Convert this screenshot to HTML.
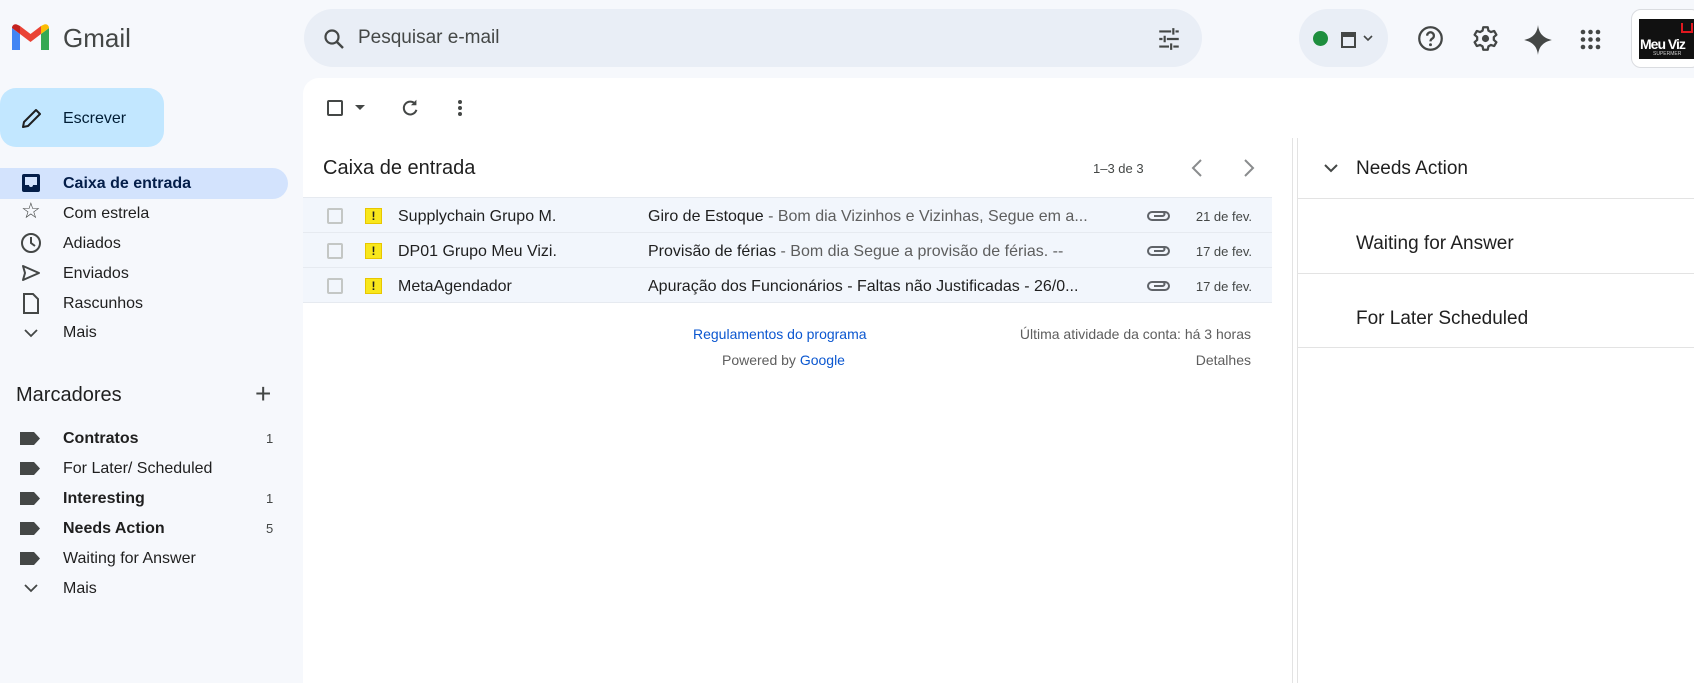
<!DOCTYPE html>
<html><head><meta charset="utf-8"><style>
*{margin:0;padding:0;box-sizing:border-box}
body{width:1694px;height:683px;overflow:hidden;background:#f6f8fc;font-family:"Liberation Sans",Arial,sans-serif;color:#1f1f1f;position:relative}
.a{position:absolute;white-space:nowrap}
.nav{position:absolute;left:63px;font-size:16px;color:#1f1f1f;line-height:20px}
.ic{position:absolute}
.lab{position:absolute;left:20px;width:20px;height:13px;background:#444746;clip-path:polygon(0 0,70% 0,100% 50%,70% 100%,0 100%)}
.cnt{position:absolute;left:266px;font-size:13px;color:#444746}
.row{position:absolute;left:303px;width:969px;height:35px;background:#f2f6fc;border-bottom:1px solid #e6eaf0}
.row .cb{position:absolute;left:24px;top:10px;width:16px;height:16px;border:2px solid #c4c7c5;border-radius:2px}
.row .imp{position:absolute;left:62px;top:10px;width:17px;height:16px;background:#f8e71c;border:1px solid #e8c600;font:bold 12px "Liberation Sans";text-align:center;line-height:14px;color:#1f1f1f}
.row .s{position:absolute;left:95px;top:10px;font-size:16px}
.row .sub{position:absolute;left:345px;top:10px;font-size:16px}
.row .sub span{color:#5e5e5e}
.row .d{position:absolute;right:20px;top:11px;font-size:13px;color:#444746}
.row .clip{position:absolute;left:843px;top:11px}
.rp{position:absolute;left:1356px;font-size:19px;color:#1f1f1f}
.sep{position:absolute;left:1298px;width:396px;height:1px;background:#e3e3e3}
</style></head><body>
<svg class="ic" style="left:12px;top:24px" width="37" height="28" viewBox="0 0 37 28">
<path d="M0 4v22h8V10z" fill="#4285f4"/><path d="M29 10v16h8V4z" fill="#34a853"/>
<path d="M29 2v8l-10.5 8L8 10V2l10.5 8z" fill="#ea4335"/>
<path d="M0 4c0-3 3-5 6-3l2 1v8L0 4z" fill="#c5221f"/><path d="M37 4c0-3-3-5-6-3l-2 1v8l8-6z" fill="#fbbc04"/>
</svg>
<div class="a" style="left:63px;top:23px;font-size:26px;color:#444746">Gmail</div>
<div class="a" style="left:304px;top:9px;width:898px;height:58px;border-radius:29px;background:#e9eef6"></div>
<svg class="ic" style="left:322px;top:27px" width="24" height="24" viewBox="0 0 24 24"><circle cx="10" cy="10" r="6.5" fill="none" stroke="#444746" stroke-width="2.2"/><path d="M15 15l6 6" stroke="#444746" stroke-width="2.4"/></svg>
<div class="a" style="left:358px;top:27px;font-size:19px;color:#444746">Pesquisar e-mail</div>
<svg class="ic" style="left:1156px;top:26px" width="26" height="26" viewBox="0 0 24 24" stroke="#444746" stroke-width="2" fill="none"><path d="M3 5h11M18 5h3M3 12h3M10 12h11M3 19h9M16 19h5M16 2v6M8 9v6M14 16v6"/></svg>
<div class="a" style="left:1299px;top:9px;width:89px;height:58px;border-radius:29px;background:#e9eef6"></div>
<div class="a" style="left:1313px;top:31px;width:15px;height:15px;border-radius:50%;background:#1e8e3e"></div>
<svg class="ic" style="left:1340px;top:29px" width="18" height="20" viewBox="0 0 18 20"><rect x="2" y="4" width="13" height="14" fill="none" stroke="#444746" stroke-width="2"/><rect x="2" y="4" width="13" height="4" fill="#444746"/></svg>
<svg class="ic" style="left:1363px;top:34px" width="10" height="8" viewBox="0 0 10 8"><path d="M1 2l4 4 4-4" stroke="#444746" stroke-width="1.6" fill="none"/></svg>
<svg class="ic" style="left:1417px;top:25px" width="27" height="27" viewBox="0 0 24 24"><circle cx="12" cy="12" r="10" fill="none" stroke="#444746" stroke-width="2"/><path d="M9 9.5a3 3 0 1 1 4.5 2.6c-1 .6-1.5 1.2-1.5 2.4" fill="none" stroke="#444746" stroke-width="2"/><circle cx="12" cy="17.5" r="1.3" fill="#444746"/></svg>
<svg class="ic" style="left:1472px;top:25px" width="27" height="27" viewBox="0 0 24 24"><path d="M10 2h4l.6 3 2.2 1.3 2.9-1 2 3.4-2.3 2v2.6l2.3 2-2 3.4-2.9-1-2.2 1.3-.6 3h-4l-.6-3-2.2-1.3-2.9 1-2-3.4 2.3-2V10.7l-2.3-2 2-3.4 2.9 1L9.4 5z" fill="none" stroke="#444746" stroke-width="2" stroke-linejoin="round"/><circle cx="12" cy="12" r="3.2" fill="#444746"/></svg>
<svg class="ic" style="left:1524px;top:25px" width="28" height="30" viewBox="0 0 24 26"><path d="M12 0C12.8 7 16 11 24 13 16 15 12.8 19 12 26 11.2 19 8 15 0 13 8 11 11.2 7 12 0z" fill="#444746"/></svg>
<svg class="ic" style="left:1580px;top:29px" width="21" height="21" viewBox="0 0 21 21" fill="#444746"><circle cx="3" cy="3" r="2.3"/><circle cx="10.5" cy="3" r="2.3"/><circle cx="18" cy="3" r="2.3"/><circle cx="3" cy="10.5" r="2.3"/><circle cx="10.5" cy="10.5" r="2.3"/><circle cx="18" cy="10.5" r="2.3"/><circle cx="3" cy="18" r="2.3"/><circle cx="10.5" cy="18" r="2.3"/><circle cx="18" cy="18" r="2.3"/></svg>
<div class="a" style="left:1631px;top:9px;width:70px;height:59px;border:1px solid #dadce0;border-radius:10px;background:#fff"></div>
<div class="a" style="left:1639px;top:19px;width:60px;height:40px;background:#111;overflow:hidden">
<div class="a" style="left:1px;top:17px;font:bold 14px 'Liberation Sans';color:#fff;letter-spacing:-1px">Meu Viz</div>
<div class="a" style="left:42px;top:4px;width:12px;height:10px;border:2px solid #e0181f;border-top:none"></div>
<div class="a" style="left:14px;top:32px;font-size:5px;color:#ccc">SUPERMER</div>
</div>
<div class="a" style="left:0;top:88px;width:164px;height:59px;border-radius:16px;background:#c2e7ff"></div>
<svg class="ic" style="left:20px;top:106px" width="24" height="24" viewBox="0 0 24 24"><path d="M3 21l1-5L16 4l4 4L8 20z" fill="none" stroke="#1f1f1f" stroke-width="2" stroke-linejoin="round"/></svg>
<div class="a" style="left:63px;top:110px;font-size:16px;color:#001d35">Escrever</div>
<div class="a" style="left:0;top:168px;width:288px;height:31px;border-radius:0 16px 16px 0;background:#d3e3fd"></div>
<svg class="ic" style="left:21px;top:173px" width="20" height="20" viewBox="0 0 20 20"><rect x="1" y="1" width="18" height="18" rx="2" fill="#041e49"/><path d="M4 4h12v8h-4a2 2 0 0 1-4 0H4z" fill="#d3e3fd"/></svg>
<div class="nav" style="top:174px;font-weight:bold;color:#041e49">Caixa de entrada</div>
<div class="nav" style="left:21px;top:201px;font-size:22px;color:#444746">☆</div>
<div class="nav" style="top:204px">Com estrela</div>
<svg class="ic" style="left:20px;top:232px" width="22" height="22" viewBox="0 0 22 22"><circle cx="11" cy="11" r="9" fill="none" stroke="#444746" stroke-width="2"/><path d="M11 5v6l4 3" fill="none" stroke="#444746" stroke-width="2"/></svg>
<div class="nav" style="top:234px">Adiados</div>
<svg class="ic" style="left:21px;top:264px" width="20" height="18" viewBox="0 0 20 18"><path d="M2 2l16 7-16 7 2-7z" fill="none" stroke="#444746" stroke-width="2" stroke-linejoin="round"/></svg>
<div class="nav" style="top:264px">Enviados</div>
<svg class="ic" style="left:22px;top:293px" width="17" height="21" viewBox="0 0 17 21"><path d="M2 1h9l5 5v14H2z" fill="none" stroke="#444746" stroke-width="2"/></svg>
<div class="nav" style="top:294px">Rascunhos</div>
<svg class="ic" style="left:24px;top:329px" width="14" height="9" viewBox="0 0 14 9"><path d="M1 1l6 6 6-6" stroke="#444746" stroke-width="1.8" fill="none"/></svg>
<div class="nav" style="top:323px">Mais</div>
<div class="a" style="left:16px;top:384px;font-size:20px;color:#1f1f1f">Marcadores</div>
<div class="a" style="left:255px;top:378px;font-size:28px;color:#444746;font-weight:300">+</div>
<div class="lab" style="top:432px"></div><div class="nav" style="top:429px;font-weight:bold">Contratos</div><div class="cnt" style="top:431px">1</div>
<div class="lab" style="top:462px"></div><div class="nav" style="top:459px">For Later/ Scheduled</div>
<div class="lab" style="top:492px"></div><div class="nav" style="top:489px;font-weight:bold">Interesting</div><div class="cnt" style="top:491px">1</div>
<div class="lab" style="top:522px"></div><div class="nav" style="top:519px;font-weight:bold">Needs Action</div><div class="cnt" style="top:521px">5</div>
<div class="lab" style="top:552px"></div><div class="nav" style="top:549px">Waiting for Answer</div>
<svg class="ic" style="left:24px;top:584px" width="14" height="9" viewBox="0 0 14 9"><path d="M1 1l6 6 6-6" stroke="#444746" stroke-width="1.8" fill="none"/></svg>
<div class="nav" style="top:579px">Mais</div>
<div class="a" style="left:303px;top:78px;width:1391px;height:605px;background:#fff;border-radius:16px 0 0 0"></div>
<div class="a" style="left:327px;top:100px;width:16px;height:16px;border:2px solid #444746;border-radius:2px"></div>
<svg class="ic" style="left:355px;top:105px" width="10" height="6" viewBox="0 0 10 6"><path d="M0 0h10L5 5z" fill="#444746"/></svg>
<svg class="ic" style="left:399px;top:97px" width="22" height="22" viewBox="0 0 24 24"><path d="M18 8a7 7 0 1 0 1 6" fill="none" stroke="#444746" stroke-width="2.2"/><path d="M19 3v6h-6z" fill="#444746"/></svg>
<svg class="ic" style="left:457px;top:99px" width="6" height="18" viewBox="0 0 6 18" fill="#444746"><circle cx="3" cy="3" r="2"/><circle cx="3" cy="9" r="2"/><circle cx="3" cy="15" r="2"/></svg>
<div class="a" style="left:323px;top:157px;font-size:20px;color:#1f1f1f">Caixa de entrada</div>
<div class="a" style="left:1093px;top:161px;font-size:13px;color:#444746">1–3 de 3</div>
<svg class="ic" style="left:1190px;top:158px" width="14" height="20" viewBox="0 0 14 20"><path d="M11 2L3 10l8 8" stroke="#8a8c8e" stroke-width="2" fill="none"/></svg>
<svg class="ic" style="left:1242px;top:158px" width="14" height="20" viewBox="0 0 14 20"><path d="M3 2l8 8-8 8" stroke="#8a8c8e" stroke-width="2" fill="none"/></svg>
<div class="a" style="left:303px;top:197px;width:969px;height:1px;background:#e6eaf0"></div>
<div class="row" style="top:198px"><div class="cb"></div><div class="imp">!</div><div class="s">Supplychain Grupo M.</div><div class="sub">Giro de Estoque <span>- Bom dia Vizinhos e Vizinhas, Segue em a...</span></div>
<svg class="clip" width="24" height="14" viewBox="0 0 24 14"><path d="M9 3h10a4 4 0 0 1 0 8H6a4 4 0 0 1 0-8h10.5a2 2 0 0 1 0 4H8" fill="none" stroke="#5f6368" stroke-width="2"/></svg><div class="d">21 de fev.</div></div>
<div class="row" style="top:233px"><div class="cb"></div><div class="imp">!</div><div class="s">DP01 Grupo Meu Vizi.</div><div class="sub">Provisão de férias <span>- Bom dia Segue a provisão de férias. --</span></div>
<svg class="clip" width="24" height="14" viewBox="0 0 24 14"><path d="M9 3h10a4 4 0 0 1 0 8H6a4 4 0 0 1 0-8h10.5a2 2 0 0 1 0 4H8" fill="none" stroke="#5f6368" stroke-width="2"/></svg><div class="d">17 de fev.</div></div>
<div class="row" style="top:268px"><div class="cb"></div><div class="imp">!</div><div class="s">MetaAgendador</div><div class="sub">Apuração dos Funcionários - Faltas não Justificadas - 26/0...</div>
<svg class="clip" width="24" height="14" viewBox="0 0 24 14"><path d="M9 3h10a4 4 0 0 1 0 8H6a4 4 0 0 1 0-8h10.5a2 2 0 0 1 0 4H8" fill="none" stroke="#5f6368" stroke-width="2"/></svg><div class="d">17 de fev.</div></div>
<div class="a" style="left:693px;top:326px;font-size:14px;color:#0b57d0">Regulamentos do programa</div>
<div class="a" style="left:722px;top:352px;font-size:14px;color:#5e5e5e">Powered by <span style="color:#0b57d0">Google</span></div>
<div class="a" style="right:443px;top:326px;font-size:14px;color:#5e5e5e">Última atividade da conta: há 3 horas</div>
<div class="a" style="right:443px;top:352px;font-size:14px;color:#5e5e5e">Detalhes</div>
<div class="a" style="left:1292px;top:138px;width:1px;height:545px;background:#e3e3e3"></div>
<div class="a" style="left:1297px;top:138px;width:1px;height:545px;background:#e3e3e3"></div>
<svg class="ic" style="left:1324px;top:164px" width="14" height="9" viewBox="0 0 14 9"><path d="M1 1l6 6 6-6" stroke="#444746" stroke-width="2" fill="none"/></svg>
<div class="rp" style="top:158px">Needs Action</div>
<div class="sep" style="top:198px"></div>
<div class="rp" style="top:233px">Waiting for Answer</div>
<div class="sep" style="top:273px"></div>
<div class="rp" style="top:308px">For Later Scheduled</div>
<div class="sep" style="top:347px"></div>
</body></html>
